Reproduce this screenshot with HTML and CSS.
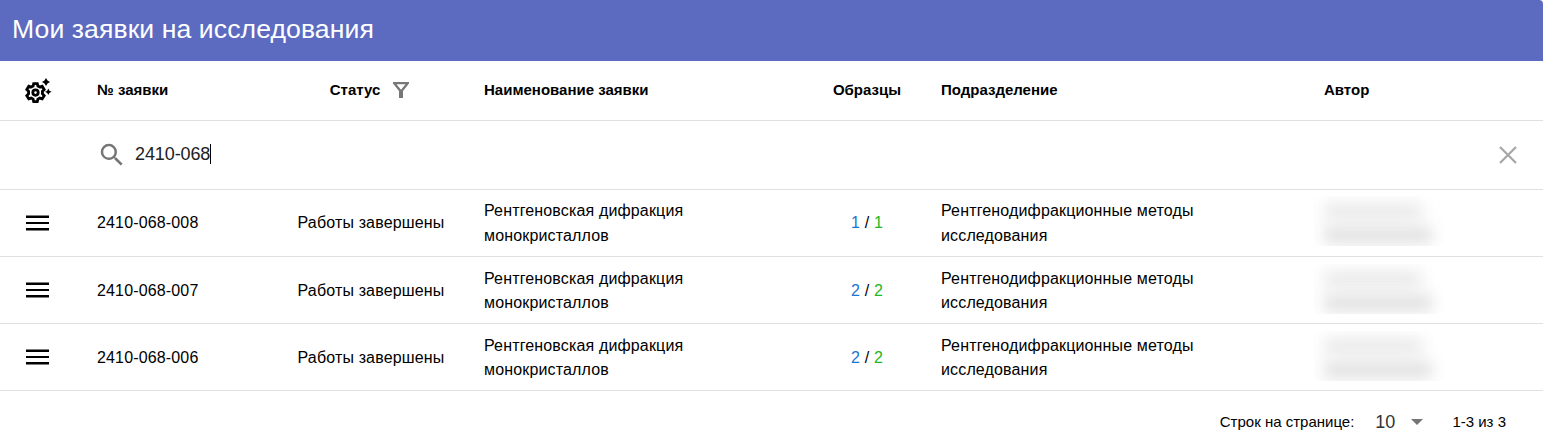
FILE: index.html
```html
<!DOCTYPE html>
<html lang="ru">
<head>
    <meta charset="UTF-8">
    <meta name="viewport" content="width=device-width, initial-scale=1.0">
    <title>Мои заявки на исследования</title>
    <link rel="stylesheet" href="styles.css">
</head>
<body>
    <header class="title-bar">
        <h1>Мои заявки на исследования</h1>
    </header>

    <!-- Table header -->
    <div class="row head-row">
        <div class="cell-menu">
            <svg class="gear" width="28" height="26" viewBox="0 0 28 26">
                <path class="gear-body" d="M9.7 5.6h3.6l.6 2.5 1.9 1 2.4-.8 2 3.2-1.8 1.9v2.4l1.8 1.9-2 3.2-2.4-.8-1.9 1-.6 2.5H9.7l-.6-2.5-1.9-1-2.4.8-2-3.2 1.8-1.9v-2.4l-1.8-1.9 2-3.2 2.4.8 1.9-1z"/>
                <circle class="gear-body" cx="11.5" cy="14.6" r="2.7"/>
                <path d="M22 0l1.5 2.5L26 4l-2.5 1.5L22 8l-1.5-2.5L18 4l2.5-1.5zM24.3 10.6l1.1 2.1 2.1 1.1-2.1 1.1-1.1 2.1-1.1-2.1-2.1-1.1 2.1-1.1z"/>
            </svg>
        </div>
        <div class="cell-number">№ заявки</div>
        <div class="cell-status">
            <span>Статус</span>
            <svg class="filter" width="16" height="16" viewBox="0 0 16 16">
                <path fill-rule="evenodd" d="M0 0h16v1.5L10 9v7H6V9L0 1.5zM3.5 2.3L8 7.8l4.5-5.5z"/>
            </svg>
        </div>
        <div class="cell-name">Наименование заявки</div>
        <div class="cell-samples">Образцы</div>
        <div class="cell-department">Подразделение</div>
        <div class="cell-author">Автор</div>
    </div>

    <!-- Search -->
    <div class="search-row">
        <svg class="search-icon" width="30" height="30" viewBox="0 0 24 24">
            <path d="M15.5 14h-.79l-.28-.27A6.47 6.47 0 0 0 16 9.5 6.5 6.5 0 1 0 9.5 16c1.61 0 3.09-.59 4.23-1.57l.27.28v.79l5 4.99L20.49 19l-4.99-5zm-6 0C7.01 14 5 11.99 5 9.5S7.01 5 9.5 5 14 7.01 14 9.5 11.99 14 9.5 14z"/>
        </svg>
        <div class="search-value">2410-068</div>
        <svg class="clear-icon" width="18" height="18" viewBox="0 0 18 18">
            <path d="M1 1l16 16M17 1l-16 16"/>
        </svg>
    </div>

    <!-- Requests -->
    <div class="row first-row">
        <div class="cell-menu">
            <svg class="burger" width="23" height="16" viewBox="0 0 23 16"><path d="M0 .5h23V3H0zM0 7h23v2H0zM0 13h23v2.5H0z"/></svg>
        </div>
        <div class="cell-number">2410-068-008</div>
        <div class="cell-status">Работы завершены</div>
        <div class="cell-name">Рентгеновская дифракция монокристаллов</div>
        <div class="cell-samples"><span class="total">1</span> / <span class="done">1</span></div>
        <div class="cell-department">Рентгенодифракционные методы исследования</div>
        <div class="cell-author"><div class="hidden-author"><i></i><i></i></div></div>
    </div>
    <div class="row">
        <div class="cell-menu">
            <svg class="burger" width="23" height="16" viewBox="0 0 23 16"><path d="M0 .5h23V3H0zM0 7h23v2H0zM0 13h23v2.5H0z"/></svg>
        </div>
        <div class="cell-number">2410-068-007</div>
        <div class="cell-status">Работы завершены</div>
        <div class="cell-name">Рентгеновская дифракция монокристаллов</div>
        <div class="cell-samples"><span class="total">2</span> / <span class="done">2</span></div>
        <div class="cell-department">Рентгенодифракционные методы исследования</div>
        <div class="cell-author"><div class="hidden-author"><i></i><i></i></div></div>
    </div>
    <div class="row">
        <div class="cell-menu">
            <svg class="burger" width="23" height="16" viewBox="0 0 23 16"><path d="M0 .5h23V3H0zM0 7h23v2H0zM0 13h23v2.5H0z"/></svg>
        </div>
        <div class="cell-number">2410-068-006</div>
        <div class="cell-status">Работы завершены</div>
        <div class="cell-name">Рентгеновская дифракция монокристаллов</div>
        <div class="cell-samples"><span class="total">2</span> / <span class="done">2</span></div>
        <div class="cell-department">Рентгенодифракционные методы исследования</div>
        <div class="cell-author"><div class="hidden-author"><i></i><i></i></div></div>
    </div>

    <!-- Pagination -->
    <footer class="pagination">
        <span class="per-page">Строк на странице:</span>
        <span class="page-size">10</span>
        <span class="arrow"></span>
        <span class="range">1-3 из 3</span>
    </footer>
</body>
</html>
```
FILE: styles.css
```css
* {
    box-sizing: border-box;
}
body {
    margin: 0;
    height: 448px;
    overflow: hidden;
    background: white;
    color: #000;
    font-family: "Liberation Sans", Arial, sans-serif;
    font-size: 16px;
    line-height: 24px;
}
.title-bar {
    height: 61px;
    padding-left: 12px;
    display: flex;
    align-items: center;
    background: #5c6bc0;
    color: white;
    border-top-right-radius: 4px;
}
h1 {
    margin: 0 0 4px;
    font-size: 26.6px;
    font-weight: 400;
    letter-spacing: 0.08px;
}
.row {
    height: 67px;
    padding-top: 1px;
    display: grid;
    grid-template-columns: 97px 180px 207px 329px 128px 383px 1fr;
    align-items: center;
    border-bottom: 1px solid #e0e0e0;
    letter-spacing: 0.15px;
}
.first-row {
    padding: 0 0 1px;
    line-height: 25px;
}
.head-row {
    height: 60px;
    padding: 0 0 2px;
    font-size: 15px;
    font-weight: 700;
    line-height: 25px;
    letter-spacing: 0;
}
.cell-menu {
    padding: 0 0 1px 24px;
}
.head-row .cell-menu {
    padding: 2px 0 0 24px;
}
.first-row .cell-menu {
    padding-bottom: 0;
}
.cell-status {
    padding-right: 19px;
    display: flex;
    justify-content: center;
    align-items: center;
    gap: 13px;
}
.head-row .cell-status {
    padding-right: 22px;
}
.cell-name {
    padding-right: 90px;
}
.cell-samples {
    padding-right: 20px;
    text-align: center;
}
.cell-department {
    padding-right: 100px;
}
.gear {
    display: block;
}
.gear-body {
    fill: none;
    stroke: #000;
    stroke-width: 2.8;
}
.filter {
    fill: #777;
}
.burger {
    display: block;
    margin-left: 2px;
}
.total {
    color: #1976d2;
}
.done {
    color: #22b822;
}
.search-row {
    height: 69px;
    padding: 0 26px 0 97px;
    display: flex;
    align-items: center;
    border-bottom: 1px solid #e0e0e0;
}
.search-icon {
    fill: #757575;
}
.search-value {
    height: 20px;
    margin: 0 0 2px 8px;
    border-right: 1px solid #000;
    color: #212121;
    font-size: 18px;
    line-height: 20px;
    letter-spacing: -0.1px;
}
.clear-icon {
    margin-left: auto;
    stroke: #a6a6a6;
    stroke-width: 2.2;
}
.hidden-author {
    width: 130px;
    height: 50px;
    margin: -3px 0 0 -10px;
    padding: 9px 10px;
    overflow: hidden;
}
.hidden-author i {
    display: block;
    width: 98px;
    height: 12px;
    background: #e2e2e2;
    filter: blur(8px);
}
.hidden-author i + i {
    width: 108px;
    height: 14px;
    margin-top: 11px;
    background: #dadada;
}
.pagination {
    height: 57px;
    padding: 5px 37px 0 0;
    display: flex;
    justify-content: flex-end;
    align-items: center;
    font-size: 15px;
}
.page-size {
    margin-left: 21px;
    color: #333;
    font-size: 18px;
}
.arrow {
    margin-left: 16px;
    border: 6px solid transparent;
    border-top-color: #757575;
    border-bottom: 0;
}
.range {
    margin-left: 29px;
}
```
